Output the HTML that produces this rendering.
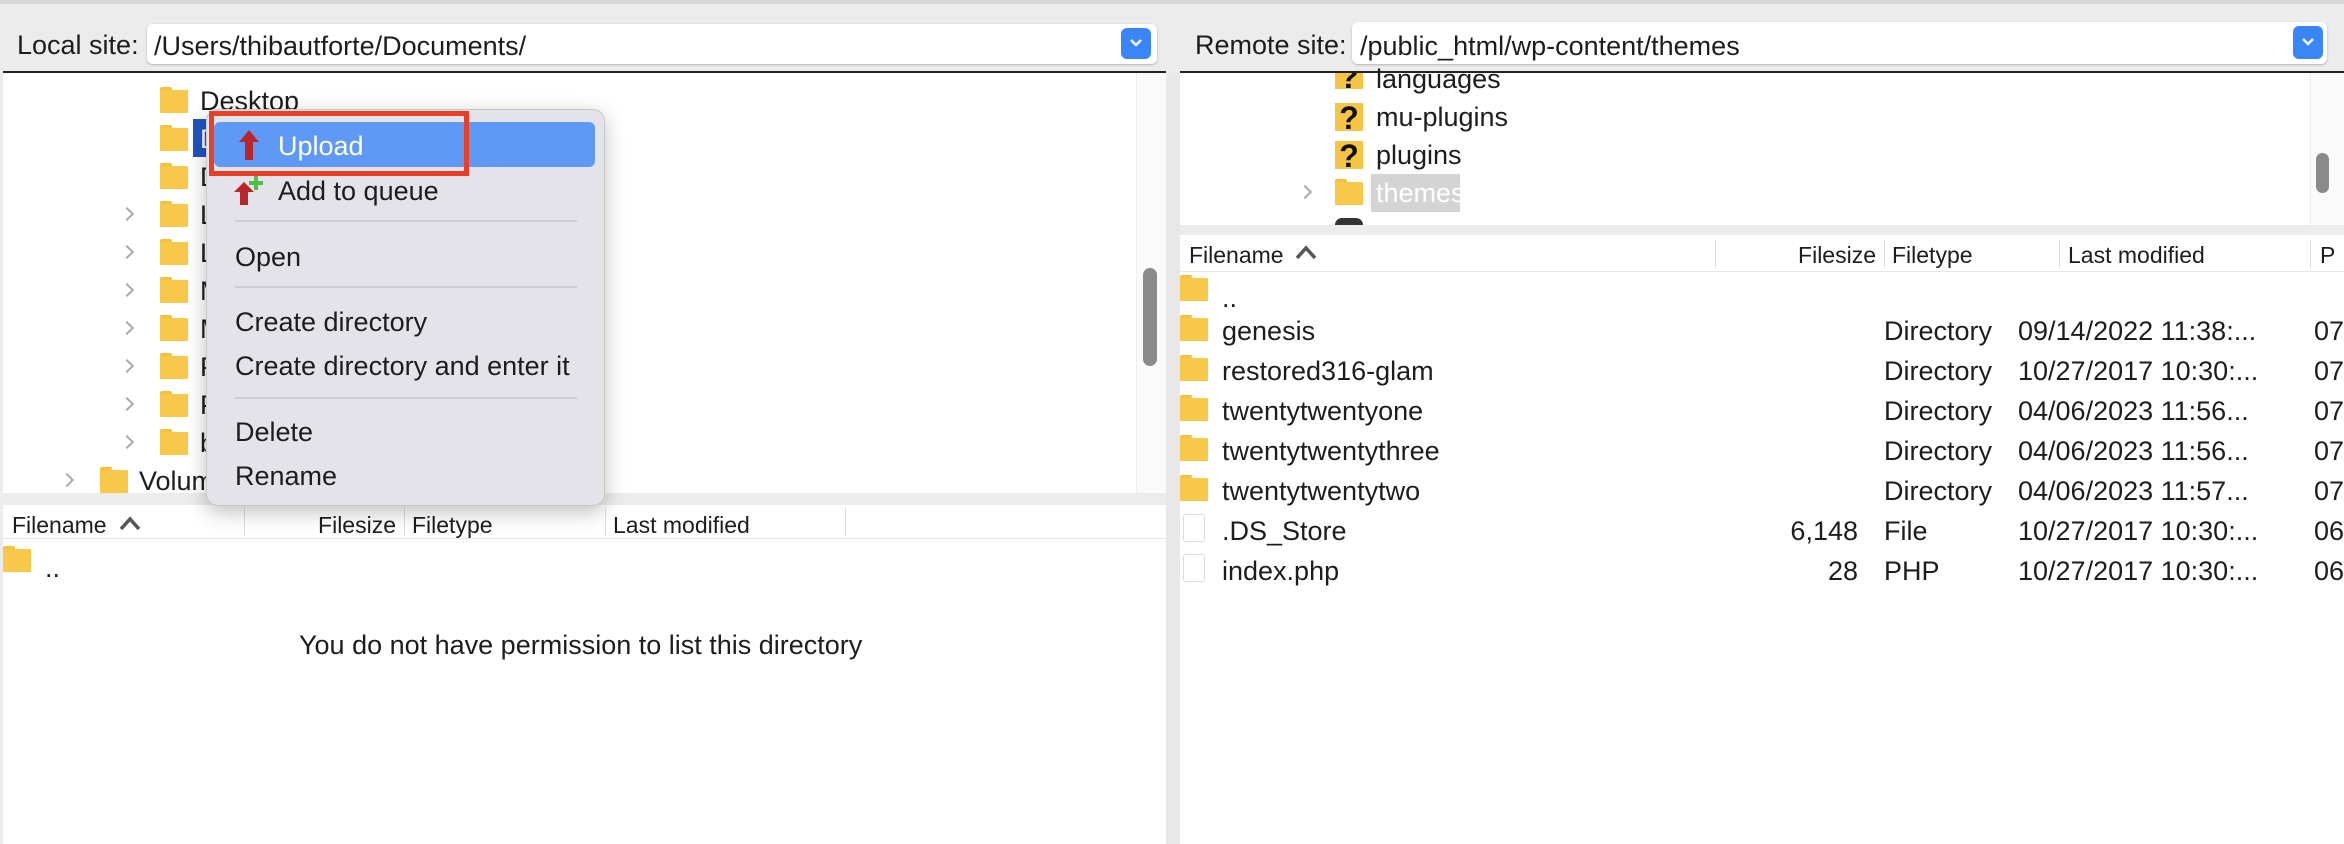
<!DOCTYPE html>
<html><head><meta charset="utf-8"><style>
*{margin:0;padding:0;box-sizing:border-box}
body{width:2344px;height:844px;background:#ececec;font-family:"Liberation Sans",sans-serif;color:#1d1d1d;position:relative;overflow:hidden}
.a{position:absolute;white-space:nowrap}
.t{font-size:27px;line-height:26px}
.h{font-size:23px;line-height:26px}
.fd{position:absolute;width:28px;height:26px}
.fd:before{content:"";position:absolute;left:0;top:0;width:12px;height:5px;background:#f5c03f;border-radius:2px 2px 0 0}
.fd:after{content:"";position:absolute;left:0;top:3px;width:28px;height:23px;background:#f8c84a;border-radius:1px}
.q{position:absolute;width:28px;height:28px;background:#f6c545;font-size:32px;font-weight:bold;line-height:30px;text-align:center;color:#111}
.chev{position:absolute;width:10px;height:10px;border-right:2px solid #aaa;border-top:2px solid #aaa;transform:rotate(45deg)}
.fl{position:absolute;width:22px;height:28px;border:1px solid #ddd;border-radius:3px;background:#fff}
.sep{position:absolute;width:1px;background:#ddd}
</style></head><body>
<div class="a" style="left:0;top:0;width:2344px;height:4px;background:#d6d6d6"></div>
<div class="a t" style="left:17px;top:32px">Local site:</div>
<div class="a" style="left:147px;top:24px;width:1010px;height:40px;background:#fff;border-radius:6px;box-shadow:0 1px 2px rgba(0,0,0,.25)"></div>
<div class="a t" style="left:154px;top:33px">/Users/thibautforte/Documents/</div>
<div class="a" style="left:1121px;top:28px;width:30px;height:31px;background:#3a85f7;border-radius:6px"></div>
<svg class="a" style="left:1128px;top:37px" width="16" height="12"><polyline points="3,3 8,8 13,3" fill="none" stroke="#fff" stroke-width="2.5"/></svg>
<div class="a t" style="left:1195px;top:32px">Remote site:</div>
<div class="a" style="left:1352px;top:22px;width:975px;height:42px;background:#fff;border-radius:6px;box-shadow:0 1px 2px rgba(0,0,0,.25)"></div>
<div class="a t" style="left:1360px;top:33px">/public_html/wp-content/themes</div>
<div class="a" style="left:2293px;top:26px;width:30px;height:33px;background:#3a85f7;border-radius:6px"></div>
<svg class="a" style="left:2300px;top:36px" width="16" height="12"><polyline points="3,3 8,8 13,3" fill="none" stroke="#fff" stroke-width="2.5"/></svg>
<div class="a" style="left:3px;top:71px;width:1163px;height:2px;background:#222"></div>
<div class="a" style="left:1180px;top:71px;width:1164px;height:2px;background:#222"></div>

<!-- left tree -->
<div class="a" style="left:3px;top:73px;width:1163px;height:420px;background:#fff"></div>
<div class="a" style="left:1136px;top:73px;width:30px;height:420px;background:#fafafa;border-left:1px solid #eee"></div>
<div class="a" style="left:1143px;top:268px;width:14px;height:98px;background:#8a8a8a;border-radius:7px"></div>
<div class="fd" style="left:160px;top:87px"></div><div class="a t" style="left:200px;top:88px">Desktop</div>
<div class="a" style="left:193px;top:119px;width:20px;height:38px;background:#1f56c2"></div>
<div class="fd" style="left:160px;top:125px"></div><div class="a t" style="left:200px;top:126px;color:#fff">D</div>
<div class="fd" style="left:160px;top:163px"></div><div class="a t" style="left:200px;top:164px">D</div>
<div class="chev" style="left:122px;top:209px"></div><div class="fd" style="left:160px;top:201px"></div><div class="a t" style="left:200px;top:202px">L</div>
<div class="chev" style="left:122px;top:247px"></div><div class="fd" style="left:160px;top:239px"></div><div class="a t" style="left:200px;top:240px">L</div>
<div class="chev" style="left:122px;top:285px"></div><div class="fd" style="left:160px;top:277px"></div><div class="a t" style="left:200px;top:278px">M</div>
<div class="chev" style="left:122px;top:323px"></div><div class="fd" style="left:160px;top:315px"></div><div class="a t" style="left:200px;top:316px">M</div>
<div class="chev" style="left:122px;top:361px"></div><div class="fd" style="left:160px;top:353px"></div><div class="a t" style="left:200px;top:354px">P</div>
<div class="chev" style="left:122px;top:399px"></div><div class="fd" style="left:160px;top:391px"></div><div class="a t" style="left:200px;top:392px">P</div>
<div class="chev" style="left:122px;top:437px"></div><div class="fd" style="left:160px;top:429px"></div><div class="a t" style="left:200px;top:430px">b</div>
<div class="chev" style="left:62px;top:475px"></div><div class="fd" style="left:100px;top:467px"></div><div class="a t" style="left:139px;top:468px">Volumes</div>

<!-- left list -->
<div class="a" style="left:3px;top:505px;width:1163px;height:339px;background:#fff"></div>
<div class="a" style="left:3px;top:505px;width:1163px;height:34px;border-bottom:1px solid #e5e5e5"></div>
<div class="a h" style="left:12px;top:512px">Filename</div>
<svg class="a" style="left:118px;top:514px" width="24" height="18"><polyline points="3,15 12,5 21,15" fill="none" stroke="#555" stroke-width="3.5"/></svg>
<div class="sep" style="left:244px;top:508px;height:28px"></div>
<div class="a h" style="right:1948px;top:512px">Filesize</div>
<div class="sep" style="left:404px;top:508px;height:28px"></div>
<div class="a h" style="left:412px;top:512px">Filetype</div>
<div class="sep" style="left:605px;top:508px;height:28px"></div>
<div class="a h" style="left:613px;top:512px">Last modified</div>
<div class="sep" style="left:845px;top:508px;height:28px"></div>
<div class="fd" style="left:3px;top:546px"></div><div class="a t" style="left:45px;top:555px">..</div>
<div class="a t" style="left:299px;top:632px">You do not have permission to list this directory</div>

<div class="a" style="left:1166px;top:73px;width:14px;height:771px;background:#e8e8e8"></div>

<!-- right tree -->
<div class="a" style="left:1180px;top:73px;width:1164px;height:152px;background:#fff"></div>
<div class="a" style="left:2310px;top:73px;width:34px;height:152px;background:#fafafa;border-left:1px solid #eee"></div>
<div class="a" style="left:2316px;top:153px;width:13px;height:40px;background:#8a8a8a;border-radius:7px"></div>
<div class="q" style="left:1335px;top:73px;height:16px;line-height:8px;overflow:hidden">?</div><div class="a t" style="left:1376px;top:66px">languages</div>
<div class="q" style="left:1335px;top:103px">?</div><div class="a t" style="left:1376px;top:104px">mu-plugins</div>
<div class="q" style="left:1335px;top:141px">?</div><div class="a t" style="left:1376px;top:142px">plugins</div>
<div class="chev" style="left:1300px;top:187px"></div><div class="fd" style="left:1335px;top:179px"></div>
<div class="a" style="left:1371px;top:174px;width:89px;height:38px;background:#d4d4d4"></div><div class="a t" style="left:1376px;top:180px;color:#fff">themes</div>
<div class="a" style="left:1335px;top:218px;width:28px;height:7px;background:#333;border-radius:14px 14px 0 0"></div>

<!-- right list -->
<div class="a" style="left:1180px;top:235px;width:1164px;height:609px;background:#fff"></div>
<div class="a" style="left:1180px;top:235px;width:1164px;height:37px;border-bottom:1px solid #e8e8e8"></div>
<div class="a h" style="left:1189px;top:242px">Filename</div>
<svg class="a" style="left:1294px;top:243px" width="24" height="18"><polyline points="3,15 12,5 21,15" fill="none" stroke="#555" stroke-width="3.5"/></svg>
<div class="sep" style="left:1715px;top:240px;height:28px"></div>
<div class="a h" style="right:468px;top:242px">Filesize</div>
<div class="sep" style="left:1884px;top:240px;height:28px"></div>
<div class="a h" style="left:1892px;top:242px">Filetype</div>
<div class="sep" style="left:2059px;top:240px;height:28px"></div>
<div class="a h" style="left:2068px;top:242px">Last modified</div>
<div class="sep" style="left:2310px;top:240px;height:28px"></div>
<div class="a h" style="left:2320px;top:242px">P</div>

<div class="fd" style="left:1180px;top:275px"></div><div class="a t" style="left:1222px;top:285px">..</div>
<div class="fd" style="left:1180px;top:315px"></div><div class="a t" style="left:1222px;top:318px">genesis</div><div class="a t" style="left:1884px;top:318px">Directory</div><div class="a t" style="left:2018px;top:318px">09/14/2022 11:38:...</div><div class="a t" style="left:2314px;top:318px">07</div>
<div class="fd" style="left:1180px;top:355px"></div><div class="a t" style="left:1222px;top:358px">restored316-glam</div><div class="a t" style="left:1884px;top:358px">Directory</div><div class="a t" style="left:2018px;top:358px">10/27/2017 10:30:...</div><div class="a t" style="left:2314px;top:358px">07</div>
<div class="fd" style="left:1180px;top:395px"></div><div class="a t" style="left:1222px;top:398px">twentytwentyone</div><div class="a t" style="left:1884px;top:398px">Directory</div><div class="a t" style="left:2018px;top:398px">04/06/2023 11:56...</div><div class="a t" style="left:2314px;top:398px">07</div>
<div class="fd" style="left:1180px;top:435px"></div><div class="a t" style="left:1222px;top:438px">twentytwentythree</div><div class="a t" style="left:1884px;top:438px">Directory</div><div class="a t" style="left:2018px;top:438px">04/06/2023 11:56...</div><div class="a t" style="left:2314px;top:438px">07</div>
<div class="fd" style="left:1180px;top:475px"></div><div class="a t" style="left:1222px;top:478px">twentytwentytwo</div><div class="a t" style="left:1884px;top:478px">Directory</div><div class="a t" style="left:2018px;top:478px">04/06/2023 11:57...</div><div class="a t" style="left:2314px;top:478px">07</div>
<div class="fl" style="left:1183px;top:514px"></div><div class="a t" style="left:1222px;top:518px">.DS_Store</div><div class="a t" style="right:486px;top:518px">6,148</div><div class="a t" style="left:1884px;top:518px">File</div><div class="a t" style="left:2018px;top:518px">10/27/2017 10:30:...</div><div class="a t" style="left:2314px;top:518px">06</div>
<div class="fl" style="left:1183px;top:554px"></div><div class="a t" style="left:1222px;top:558px">index.php</div><div class="a t" style="right:486px;top:558px">28</div><div class="a t" style="left:1884px;top:558px">PHP</div><div class="a t" style="left:2018px;top:558px">10/27/2017 10:30:...</div><div class="a t" style="left:2314px;top:558px">06</div>

<!-- context menu -->
<div class="a" style="left:206px;top:109px;width:399px;height:397px;background:#e5e3ea;border-radius:12px;border:1px solid #c8c8c8;box-shadow:0 6px 20px rgba(0,0,0,.25)"></div>
<div class="a" style="left:214px;top:122px;width:381px;height:45px;background:#5e9af5;border-radius:6px"></div>
<div class="a" style="left:209px;top:111px;width:260px;height:65px;border:5px solid #eb3e26"></div>
<svg class="a" style="left:238px;top:129px" width="22" height="32" viewBox="0 0 22 32"><path d="M11 1 L21 13 L15 13 L15 31 L7 31 L7 13 L1 13 Z" fill="#b8262b"/></svg>
<div class="a t" style="left:278px;top:133px;color:#fff">Upload</div>
<svg class="a" style="left:232px;top:174px" width="34" height="32" viewBox="0 0 34 32"><path d="M12 8 L22 18 L16 18 L16 31 L8 31 L8 18 L2 18 Z" fill="#b8262b"/><path d="M22 2 h4 v5 h5 v4 h-5 v5 h-4 v-5 h-5 v-4 h5z" fill="#4cc04a"/></svg>
<div class="a t" style="left:278px;top:178px">Add to queue</div>
<div class="a" style="left:235px;top:220px;width:342px;height:2px;background:#cfcdd3"></div>
<div class="a t" style="left:235px;top:244px">Open</div>
<div class="a" style="left:235px;top:286px;width:342px;height:2px;background:#cfcdd3"></div>
<div class="a t" style="left:235px;top:309px">Create directory</div>
<div class="a t" style="left:235px;top:353px">Create directory and enter it</div>
<div class="a" style="left:235px;top:397px;width:342px;height:2px;background:#cfcdd3"></div>
<div class="a t" style="left:235px;top:419px">Delete</div>
<div class="a t" style="left:235px;top:463px">Rename</div>
</body></html>
